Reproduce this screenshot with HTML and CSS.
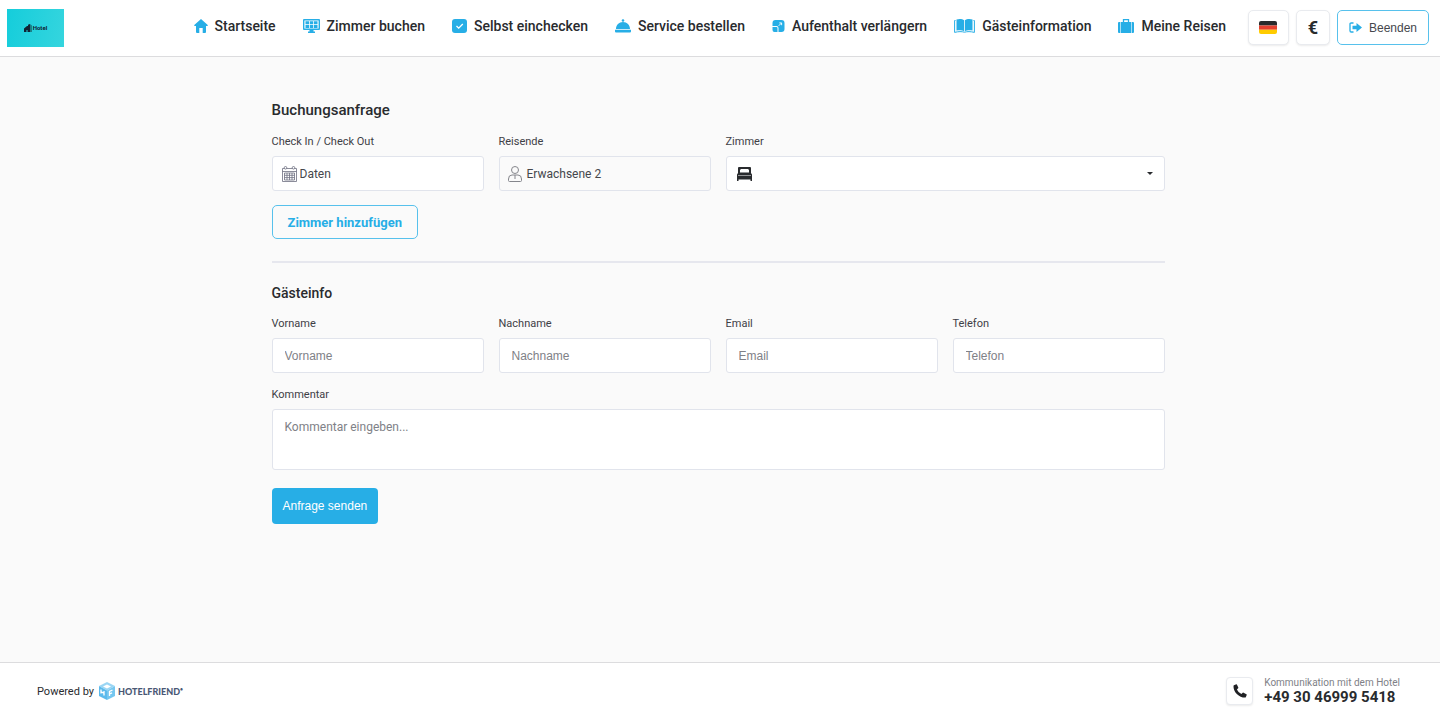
FILE: index.html
```html
<!DOCTYPE html>
<html lang="de">
<head>
<meta charset="utf-8">
<meta name="viewport" content="width=device-width, initial-scale=1">
<title>Buchungsanfrage</title>
<link rel="stylesheet" href="styles.css">
</head>
<body>
<header class="header">
  <a class="logo" href="#" aria-label="Hotel">
    <svg width="8" height="8" viewBox="0 0 8 8"><path d="M0 4.500L3 2h1V.8L6 0v8H3.500V6H2.500v2H0z" fill="#123"/><path d="M6 0l2 1.500V8H6z" fill="#1b8088"/></svg>
    <span>Hotel</span>
  </a>
  <nav class="nav">
    <a href="#"><svg width="14" height="14" viewBox="0 0 14 14"><path d="M7 0l7 6.200-.7.900H12V13a1 1 0 0 1-1 1H8.700V9H5.300v5H3a1 1 0 0 1-1-1V7.100H.7L0 6.200z"/></svg>Startseite</a>
    <a href="#"><svg width="17" height="14" viewBox="0 0 17 14"><path fill-rule="evenodd" d="M1 0h15a1 1 0 0 1 1 1v9a1 1 0 0 1-1 1h-5.500v1.500H12V14H5v-1.500h1.500V11H1a1 1 0 0 1-1-1V1a1 1 0 0 1 1-1zm.4 1.400v8.200h14.200V1.400z"/><path d="M2.500 2.200h3.500v3H2.500zm4.250 0h3.500v3h-3.500zm4.250 0h3.500v3H11zM2.500 5.900h3.500v3H2.500zm4.250 0h3.500v3h-3.500zm4.250 0h3.500v3H11z"/></svg>Zimmer buchen</a>
    <a href="#"><svg width="15" height="14" viewBox="0 0 15 14"><rect width="15" height="14" rx="3"/><path d="M4.500 7l2.200 2.200L10.800 5" fill="none" stroke="#fff" stroke-width="1.300"/></svg>Selbst einchecken</a>
    <a href="#"><svg width="16" height="14" viewBox="0 0 16 14"><circle cx="8" cy="1.500" r="1.300"/><path d="M1 10C1 6 4 3 8 3s7 3 7 7zM0 10.800h16v1.700a1 1 0 0 1-1 1H1a1 1 0 0 1-1-1z"/></svg>Service bestellen</a>
    <a href="#"><svg width="13" height="12" viewBox="0 0 12 12"><path d="M3 0h6a3 3 0 0 1 3 3v6a3 3 0 0 1-3 3H6V8a2 2 0 0 0-2-2H0V3a3 3 0 0 1 3-3zM0 7h4a1 1 0 0 1 1 1v4H2a2 2 0 0 1-2-2z"/><path d="M6.200 5.800l2.600-2.600M6.800 2.900h2.300v2.300" fill="none" stroke="#fff" stroke-width=".9"/></svg>Aufenthalt verlängern</a>
    <a href="#"><svg width="21" height="14" viewBox="0 0 21 14"><path d="M2.500.6C5-.3 8.500 0 10.100 1.300v11C8 11 5 11 2.500 11.600zM18.500.6c-2.500-.9-6-.6-7.600.7v11c2.100-1.300 5.100-1.300 7.600-.7z"/><path d="M1.500 1.500H.6v11.900c4-1 7-1 9.900-.2 2.900-.8 5.900-.8 9.900.2V1.500h-.9" fill="none" stroke="#27aee6"/></svg>Gästeinformation</a>
    <a href="#"><svg width="16" height="14" viewBox="0 0 16 14"><path d="M1 3h1.400v11H1a1 1 0 0 1-1-1V4a1 1 0 0 1 1-1zM3 3h10v11H3zM13.600 3H15a1 1 0 0 1 1 1v9a1 1 0 0 1-1 1h-1.400z"/><path d="M5.500 3V.7h5V3" fill="none" stroke="#27aee6" stroke-width="1.300"/></svg>Meine Reisen</a>
  </nav>
  <div class="tools">
    <button class="tool tool-lang" type="button" aria-label="Deutsch"><svg width="18" height="13" viewBox="0 0 18 13"><clipPath id="f"><rect width="18" height="13" rx="2"/></clipPath><g clip-path="url(#f)"><path fill="#292b2c" d="M0 0h18v4.400H0z"/><path fill="#e5402f" d="M0 4.400h18v4.300H0z"/><path fill="#fc0" d="M0 8.700h18V13H0z"/></g></svg></button>
    <button class="tool tool-currency" type="button">€</button>
    <button class="tool tool-exit" type="button"><svg width="13" height="11" viewBox="0 0 13 11"><path d="M4.500 1H2.200Q1 1 1 2.200v6.600Q1 10 2.200 10h2.300" fill="none" stroke="#27aee6" stroke-width="1.300"/><path d="M3.500 3.800h4V1L13 5.500 7.500 10V7.200h-4z" fill="#27aee6"/></svg>Beenden</button>
  </div>
</header>
<main class="main">
  <form class="form">
    <h1 class="title">Buchungsanfrage</h1>
    <div class="grid grid-booking">
      <div class="field">
        <label for="dates">Check In / Check Out</label>
        <div class="control control-dates">
          <svg width="15" height="16" viewBox="0 0 15 16" fill="none" stroke="#6d6e80"><path d="M.5 2.500h14v13H.5zM.5 5.500h14" stroke-width=".8"/><path d="M2.500 7h10v7h-10zM2.500 9.300h10M2.500 11.600h10M5 7v7M7.500 7v7M10 7v7" stroke-width=".8"/><circle cx="3.500" cy="1.800" r="1.300" fill="#fff" stroke-width=".8"/><circle cx="11.500" cy="1.800" r="1.300" fill="#fff" stroke-width=".8"/></svg>
          <input id="dates" type="text" value="Daten" readonly>
        </div>
      </div>
      <div class="field">
        <label for="guests">Reisende</label>
        <button class="control control-guests" id="guests" type="button">
          <svg width="14" height="16" viewBox="0 0 14 16" fill="none" stroke="#85868c"><circle cx="7" cy="4" r="3.500"/><path d="M4 9h6Q13.500 9 13.500 13v1.500a1 1 0 0 1-1 1h-11a1 1 0 0 1-1-1V13Q.5 9 4 9zM7 9v4"/></svg>
          <span>Erwachsene 2</span>
        </button>
      </div>
      <div class="field span-2">
        <label for="room">Zimmer</label>
        <div class="control control-room">
          <svg width="15" height="14" viewBox="0 0 15 14"><path fill="#292b2e" fill-rule="evenodd" d="M2 0h11a1 1 0 0 1 1 1v5l1 1.500V14h-1.500v-1.500h-12V14H0V7.500L1 6V1a1 1 0 0 1 1-1zm1 3V5.500h9V3l-1-1H4zM1 8v.6h13V8z"/></svg>
          <select id="room"><option value=""></option></select>
          <svg class="caret" width="6" height="3" viewBox="0 0 6 3"><path d="M0 0h6L3 3z" fill="#292b2e"/></svg>
        </div>
      </div>
    </div>
    <button class="add" type="button">Zimmer hinzufügen</button>
    <hr class="rule">
    <h2 class="subtitle">Gästeinfo</h2>
    <div class="grid">
      <div class="field"><label for="first">Vorname</label><input class="control control-text" id="first" type="text" placeholder="Vorname"></div>
      <div class="field"><label for="last">Nachname</label><input class="control control-text" id="last" type="text" placeholder="Nachname"></div>
      <div class="field"><label for="email">Email</label><input class="control control-text" id="email" type="email" placeholder="Email"></div>
      <div class="field"><label for="phone">Telefon</label><input class="control control-text" id="phone" type="tel" placeholder="Telefon"></div>
      <div class="field span-4"><label for="comment">Kommentar</label><textarea class="comment" id="comment" placeholder="Kommentar eingeben..."></textarea></div>
    </div>
    <button class="submit" type="submit">Anfrage senden</button>
  </form>
</main>
<footer class="footer">
  <div class="powered">
    <span>Powered by</span>
    <a class="brand" href="#">
      <svg width="16" height="18" viewBox="0 0 16 18"><path fill="#9bd6f4" d="M8 0l8 4-8 4.500L0 4z"/><path fill="#5cbaec" d="M0 4l8 4.500V18l-8-4z"/><path fill="#75c7f0" d="M16 4L8 8.500V18l8-4z"/><path fill="#fff" d="M8 2.500L12 4.500 8 6.500 4 4.500z"/><path d="M2 7.500v4M2 9.800l3 1.400M5 9v4.500M10.500 14V9.500l3-1.500M10.500 12l2.500-1.200" fill="none" stroke="#fff" stroke-width="1.300"/></svg>
      <span>HOTELFRIEND<sup>•</sup></span>
    </a>
  </div>
  <div class="contact">
    <button class="call" type="button" aria-label="Anrufen"><svg width="14" height="14" viewBox="0 0 14 14"><path fill="#202124" d="M1 1.200L3.200.3q.5-.2.800.4l1.300 2.700q.2.500-.2.900L3.900 5.400q1.300 3 4.500 4.600l1.300-1.200q.4-.4.900-.1l2.800 1.500q.5.300.3.800l-.8 2q-.2.600-.9.600Q7.500 13.500 3.800 9.900.3 6.300.5 1.900q0-.5.500-.7z"/></svg></button>
    <div class="contact-text">
      <span class="contact-label">Kommunikation mit dem Hotel</span>
      <a href="tel:+4930469995418">+49 30 46999 5418</a>
    </div>
  </div>
</footer>
</body>
</html>
```

FILE: styles.css
```css
* { box-sizing: border-box; }
body {
  margin: 0;
  min-height: 100vh;
  display: flex;
  flex-direction: column;
  background: #fafafa;
  color: #292b2e;
  font-family: Roboto, "Liberation Sans", sans-serif;
  font-size: 12px;
}
a { color: inherit; text-decoration: none; }
button, input, select, textarea { font: inherit; color: inherit; }
button { cursor: pointer; padding: 0; }
svg { flex: none; display: block; }

.header {
  display: flex;
  align-items: center;
  min-height: 57px;
  padding: 0 11px 1px 7px;
  background: #fff;
  border-bottom: 1px solid #dcdcde;
}
.logo {
  display: flex;
  align-items: center;
  justify-content: center;
  gap: 1px;
  width: 57px;
  height: 38px;
  background: linear-gradient(100deg, #15cddb, #35d5de);
  color: #123;
  font-size: 6px;
  font-weight: 700;
}
.nav {
  display: flex;
  gap: 27px;
  margin-left: auto;
  padding-bottom: 3px;
}
.nav a {
  display: flex;
  align-items: center;
  gap: 7px;
  font-size: 14px;
  font-weight: 500;
  line-height: 20px;
  white-space: nowrap;
}
.nav svg { fill: #27aee6; }
.tools { display: flex; gap: 7px; margin-left: 22px; }
.tool {
  display: flex;
  align-items: center;
  justify-content: center;
  height: 35px;
  background: #fff;
  border: 1px solid #e9ebef;
  border-radius: 5px;
  box-shadow: 0 1px 2px #00000014;
}
.tool-lang { width: 41px; }
.tool-currency { width: 34px; font-size: 18px; font-weight: 700; }
.tool-exit {
  gap: 7px;
  padding: 0 11px;
  border-color: #57c1ec;
  box-shadow: none;
  color: #45474c;
  font-family: "Liberation Sans", sans-serif;
}

.main { flex: 1; padding: 43px 20px 40px 16px; }
.form { max-width: 893px; margin: 0 auto; }
.title, .subtitle { margin: 0; font-weight: 500; line-height: 20px; }
.title { font-size: 15px; }
.subtitle { font-size: 14px; }
.grid {
  display: grid;
  grid-template-columns: repeat(4, 1fr);
  gap: 14px 15px;
  margin-top: 13px;
}
.grid-booking { margin-top: 14px; }
.field { display: flex; flex-direction: column; gap: 6px; min-width: 0; }
.span-2 { grid-column: span 2; }
.span-4 { grid-column: span 4; }
.field label { font-size: 11px; line-height: 16px; color: #3e4046; }
.control {
  display: flex;
  align-items: center;
  width: 100%;
  height: 35px;
  background: #fff;
  border: 1px solid #e1e4ec;
  border-radius: 3px;
  color: #45474c;
}
.control input, .control select {
  flex: 1;
  min-width: 0;
  height: 100%;
  padding: 0;
  border: 0;
  background: none;
  appearance: none;
}
.control-dates { gap: 3px; padding: 0 9px; }
.control-guests { gap: 5px; padding: 0 8px; background: #fafafa; }
.control-room { gap: 8px; padding: 0 11px 0 10px; }
.control-text { padding: 0 12px; font-family: "Liberation Sans", sans-serif; }
::placeholder { color: #808187; opacity: 1; }
.comment {
  display: block;
  width: 100%;
  height: 61px;
  padding: 10px 12px;
  line-height: 15px;
  border: 1px solid #e1e4ec;
  border-radius: 3px;
  background: #fff;
  resize: none;
}
.add {
  display: block;
  height: 34px;
  margin-top: 14px;
  padding: 0 15px;
  border: 1px solid #57c1ec;
  border-radius: 5px;
  background: none;
  color: #27aee6;
  font-size: 13px;
  font-weight: 700;
}
.rule { margin: 22px 0 20px; border: 0; border-top: 2px solid #e6e7ee; }
.submit {
  display: block;
  height: 36px;
  margin-top: 18px;
  padding: 0 11px;
  border: 0;
  border-radius: 4px;
  background: #27aee6;
  color: #fff;
  font-family: "Liberation Sans", sans-serif;
  font-size: 12px;
}

.footer {
  display: flex;
  align-items: center;
  justify-content: space-between;
  min-height: 53px;
  padding: 4px 40px 0 37px;
  background: #fff;
  border-top: 1px solid #dcdcde;
}
.powered, .brand { display: flex; align-items: center; }
.powered { gap: 5px; font-size: 11px; }
.brand { gap: 3px; color: #4a5875; font-family: Lato, sans-serif; font-size: 9px; font-weight: 900; }
.brand sup { font-size: 5px; line-height: 0; }
.contact { display: flex; align-items: center; gap: 11px; }
.call {
  display: flex;
  align-items: center;
  justify-content: center;
  width: 27px;
  height: 28px;
  background: #fff;
  border: 1px solid #e9ebef;
  border-radius: 4px;
  box-shadow: 0 1px 2px #00000014;
}
.contact-text { display: flex; flex-direction: column; }
.contact-label { color: #808187; font-size: 10px; line-height: 12px; }
.contact-text a { font-size: 15px; font-weight: 700; line-height: 17px; }
```
